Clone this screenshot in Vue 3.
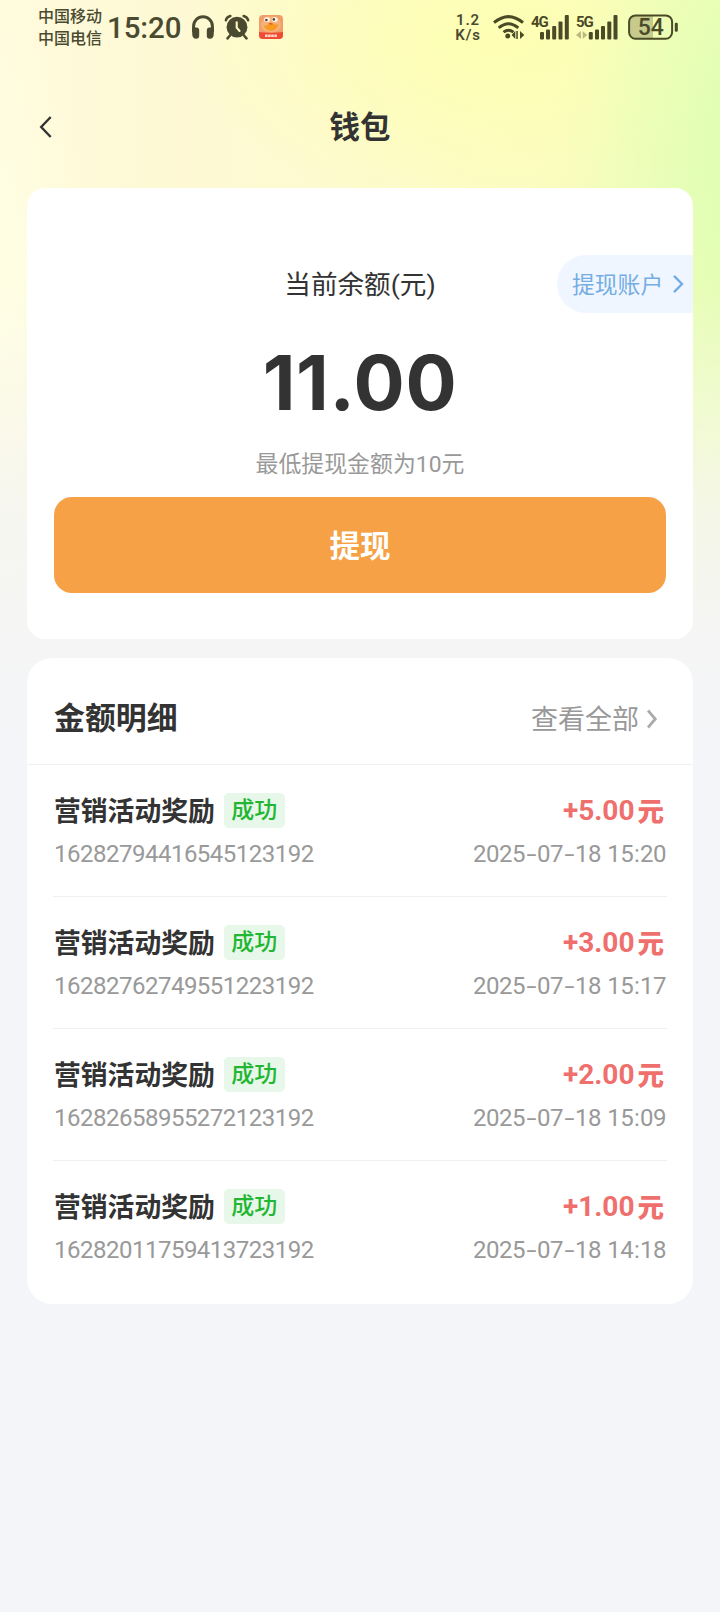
<script setup>
const records = [
  { id: '16282794416545123192', amount: '+5.00', day: ['2025', '07', '18'], time: ['15', '20'] },
  { id: '16282762749551223192', amount: '+3.00', day: ['2025', '07', '18'], time: ['15', '17'] },
  { id: '16282658955272123192', amount: '+2.00', day: ['2025', '07', '18'], time: ['15', '09'] },
  { id: '16282011759413723192', amount: '+1.00', day: ['2025', '07', '18'], time: ['14', '18'] },
]
</script>

<template>
  <div class="page">
    <header class="status">
      <div class="carriers"><span>中国移动</span><span>中国电信</span></div>
      <span class="clock">15:20</span>
      <svg class="headphones" width="24" height="26" viewBox="0 0 24 26">
        <path d="M2.6 18V12.2a9.4 9.4 0 0 1 18.8 0V18" fill="none" stroke="#4a4a31" stroke-width="3" />
        <path d="M1.2 13.5h4.3q2.7 0 2.7 3v5q0 3.2-2.9 3.2-4.1 0-4.1-5zM22.8 13.5h-4.3q-2.7 0-2.7 3v5q0 3.2 2.9 3.2 4.1 0 4.1-5z" fill="#4a4a31" />
      </svg>
      <svg class="alarm" width="26" height="26" viewBox="0 0 26 26">
        <g fill="none" stroke="#4a4a31" stroke-linecap="round">
          <path d="M1.8 6.4A6 6 0 0 1 6.4 2M19.6 2a6 6 0 0 1 4.6 4.4" stroke-width="2.4" />
          <path d="M6 21.5l-2.5 2.8M20 21.5l2.5 2.8" stroke-width="2.6" />
        </g>
        <circle cx="13" cy="13.2" r="10.4" fill="#4a4a31" />
        <path d="M12.7 8.2v5.4l2.9 3.4" fill="none" stroke="#fdf9c9" stroke-width="2.1" stroke-linecap="round" />
      </svg>
      <svg class="app" width="24" height="24" viewBox="0 0 24 24">
        <defs><clipPath id="appClip"><rect width="24" height="24" rx="4" /></clipPath></defs>
        <g clip-path="url(#appClip)">
          <rect width="24" height="24" fill="#f0a067" />
          <ellipse cx="12" cy="9.5" rx="10" ry="8" fill="#f5b07b" />
          <ellipse cx="8" cy="4.6" rx="3" ry="2.5" fill="#fff6e6" /><ellipse cx="15.7" cy="4.4" rx="3" ry="2.5" fill="#fff6e6" />
          <circle cx="7.4" cy="5" r="1.3" fill="#54412f" /><circle cx="14.8" cy="4.4" r="1.3" fill="#54412f" />
          <path d="M4.5 10.5q3.5 1 5-2 2-1.5 4 0 3 2 6 .5-1 6-7.5 7-5.5-1-7.5-5.5z" fill="#f79b24" />
          <path d="M9.5 8.5q3-1 4.5.5-2 1.5-4.5-.5z" fill="#cf6327" />
          <path d="M0 17q12 1.600 24 0V24H0z" fill="#ef4b35" />
          <path d="M6 20.800h12" stroke="#ffd9c8" stroke-width="2.400" stroke-dasharray="2.600 .5" />
        </g>
      </svg>
      <div class="speed"><span>1.2</span><span>K/s</span></div>
      <svg class="wifi" width="32" height="26" viewBox="0 0 32 26">
        <g fill="none" stroke="#4a4a27" stroke-width="3">
          <path d="M1 8.700Q15.500-3.500 30 8.700" />
          <path d="M5.700 13.900q9.800-8.400 19.600 0" />
          <path d="M10.500 18.200q5-4 10 0" />
        </g>
        <circle cx="14.800" cy="22" r="2.500" fill="#4a4a27" />
        <path d="M22.300 17v8l-3.700-4zM23.300 17h1.500v8h-1.500zM27 17v8l4.300-4z" fill="#4a4a27" />
      </svg>
      <svg class="signal4" width="39" height="26" viewBox="0 0 39 26">
        <text x="0" y="12.800" class="net">4G</text>
        <g fill="#4a4a27">
          <rect x="9" y="18" width="4" height="7.500" rx="1" /><rect x="15" y="15.500" width="4" height="10" rx="1" />
          <rect x="21.200" y="12" width="4" height="13.500" rx="1" /><rect x="27.500" y="7.500" width="4" height="18" rx="1" />
          <rect x="33.800" y="1" width="4" height="24.500" rx="1" />
        </g>
      </svg>
      <svg class="signal5" width="43" height="26" viewBox="0 0 43 26">
        <text x="0" y="12.800" class="net">5G</text>
        <path d="M5 17v8l-5-4zM6.700 17v8l4.500-4z" fill="#b9ba7d" />
        <g fill="#4a4a27">
          <rect x="12.800" y="18" width="4" height="7.500" rx="1" /><rect x="19" y="15.500" width="4" height="10" rx="1" />
          <rect x="25" y="12" width="4" height="13.500" rx="1" /><rect x="31.300" y="7.500" width="4" height="18" rx="1" />
          <rect x="37.500" y="1" width="4" height="24.500" rx="1" />
        </g>
      </svg>
      <svg class="battery" width="51" height="26" viewBox="0 0 51 26">
        <path d="M8 2h17v22H8q-6 0-6-6V8q0-6 6-6z" fill="#c6cb8d" />
        <rect x="1.100" y="1.400" width="43" height="23.400" rx="6.500" fill="none" stroke="#4a4a27" stroke-width="2" />
        <rect x="46.800" y="8.800" width="3" height="9" rx="1.200" fill="#4a4a27" />
        <text x="22.800" y="21" class="percent">54</text>
      </svg>
    </header>

    <nav class="nav">
      <svg class="back" width="14" height="24" viewBox="0 0 14 24">
        <path d="M11.700 2L2.200 12l9.500 10" fill="none" stroke="#333" stroke-width="2.400" />
      </svg>
      <h1>钱包</h1>
    </nav>

    <section class="card balance">
      <div class="label-row">
        <span class="label">当前余额(元)</span>
        <div class="account">
          <span>提现账户</span>
          <svg width="12" height="20" viewBox="0 0 12 20"><path d="M2 1.800l8 8.200-8 8.200" fill="none" stroke="#75ade3" stroke-width="2.400" /></svg>
        </div>
      </div>
      <div class="total">11.00</div>
      <div class="hint">最低提现金额为10元</div>
      <button class="withdraw">提现</button>
    </section>

    <section class="card details">
      <div class="head">
        <h2>金额明细</h2>
        <div class="all">
          <span>查看全部</span>
          <svg width="12" height="20" viewBox="0 0 12 20"><path d="M2 1.500l7.300 8.500L2 18.500" fill="none" stroke="#aaa" stroke-width="2.700" /></svg>
        </div>
      </div>
      <ul>
        <li v-for="r in records" :key="r.id">
          <div class="line first">
            <span class="name">营销活动奖励</span>
            <span class="badge">成功</span>
            <span class="amount">{{ r.amount }}<b>元</b></span>
          </div>
          <div class="line second">
            <span class="order">{{ r.id }}</span>
            <span class="date">{{ r.day[0] }}<i>-</i>{{ r.day[1] }}<i>-</i>{{ r.day[2] }} {{ r.time[0] }}<em>:</em>{{ r.time[1] }}</span>
          </div>
        </li>
      </ul>
    </section>
  </div>
</template>

<style>
body {
  background: #f3f5f8;
}
</style>

<style scoped>
.page {
  width: 720px;
  height: 1612px;
  box-sizing: border-box;
  overflow: hidden;
  font-family: Roboto, "Noto Sans CJK SC", sans-serif;
  color: #333;
  background:
    linear-gradient(to bottom, rgba(244, 245, 246, 0) 280px, rgba(244, 245, 246, 0.4) 410px, rgba(244, 245, 246, 0.75) 510px, #f5f5f5 640px, #f3f5f8 760px),
    radial-gradient(ellipse 90px 260px at 0 280px, rgba(255, 255, 228, 0.9) 0%, rgba(255, 255, 228, 0) 100%),
    radial-gradient(ellipse 220px 400px at 780px 160px, #dcffb4 0%, rgba(222, 255, 180, 0.85) 30%, rgba(222, 255, 180, 0) 100%),
    radial-gradient(ellipse 320px 170px at 500px 40px, #feffb4 0%, rgba(254, 255, 180, 0.7) 35%, rgba(254, 255, 180, 0) 100%),
    linear-gradient(to right, #fffbde 0, #fef9d6 120px, #fefad0 320px, #fcfcc4 500px, #f6fdb9 720px);
}
.status {
  display: flex;
  align-items: center;
  height: 54px;
  padding-left: 38px;
  color: #4a4a31;
}
.carriers {
  display: flex;
  flex-direction: column;
  width: 64px;
  padding-top: 1px;
  font-size: 16px;
  line-height: 22px;
  font-weight: 500;
  white-space: nowrap;
}
.clock {
  width: 76px;
  margin-left: 5px;
  padding-top: 1px;
  font-size: 29.5px;
  font-weight: 500;
  letter-spacing: -0.1px;
}
.headphones { margin-left: 8px; }
.alarm { margin-left: 9px; }
.app { margin-left: 9px; }
.speed {
  display: flex;
  flex-direction: column;
  align-items: center;
  width: 28px;
  margin-left: 171px;
  padding-top: 1px;
  font-size: 15px;
  line-height: 15px;
  font-weight: 600;
  letter-spacing: 0.8px;
}
.wifi { margin-left: 11px; }
.signal4 { margin-left: 6px; }
.signal5 { margin-left: 6px; }
.battery { margin-left: 9px; }
.signal4, .signal5 { overflow: visible; }
.net {
  font: 700 15px Roboto, sans-serif;
  letter-spacing: -1px;
  fill: #4a4a27;
}
.percent {
  font: 500 23px Roboto, sans-serif;
  text-anchor: middle;
  fill: #4a4a27;
}
.nav {
  display: grid;
  grid-template-columns: 80px 1fr 80px;
  align-items: center;
  height: 146px;
  margin-bottom: -12px;
}
.back { margin-left: 39px; }
h1, h2 {
  margin: 0;
  font-size: 30.5px;
  line-height: 44px;
  font-weight: 700;
}
h1 {
  padding-top: 2px;
  text-align: center;
}
h2 { font-size: 30.9px; }
.card {
  width: 666px;
  margin: 0 auto;
  box-sizing: border-box;
  background: #fff;
}
.balance {
  display: flex;
  flex-direction: column;
  align-items: center;
  height: 451px;
  padding-top: 67px;
  border-radius: 18px;
}
.label-row {
  display: grid;
  grid-template-columns: 136px 1fr 136px;
  align-items: center;
  width: 100%;
  height: 58px;
}
.label {
  grid-column: 2;
  padding-bottom: 3px;
  text-align: center;
  font-size: 26.6px;
}
.account {
  display: flex;
  align-items: center;
  height: 58px;
  padding-left: 15px;
  box-sizing: border-box;
  border-radius: 29px 0 0 29px;
  background: #eff6ff;
  color: #75ade3;
  font-size: 22.8px;
}
.account span { padding-bottom: 2px; }
.account svg { margin-left: 9px; }
.total {
  margin-top: 23px;
  font-family: Inter, sans-serif;
  font-size: 76px;
  line-height: 92px;
  font-weight: 700;
  letter-spacing: 0.7px;
}
.hint {
  margin-top: 20px;
  font-size: 22.9px;
  line-height: 34px;
  color: #999;
}
.withdraw {
  width: 612px;
  height: 96px;
  margin-top: 15px;
  padding: 0 0 2px;
  border: 0;
  border-radius: 18px;
  background: #f6a145;
  color: #fff;
  font: 700 30.5px "Noto Sans CJK SC", sans-serif;
}
.details {
  height: 646px;
  margin-top: 19px;
  border-radius: 25px;
}
.head {
  display: flex;
  align-items: center;
  justify-content: space-between;
  height: 107px;
  padding: 15px 35px 0 27px;
  box-sizing: border-box;
  border-bottom: 1px solid #f0f0f0;
}
.all {
  display: flex;
  align-items: center;
  font-size: 27px;
  color: #999;
}
.all span { padding-bottom: 2px; }
.all svg { margin-left: 7px; }
ul {
  margin: 0;
  padding: 0 26px;
  list-style: none;
}
li {
  height: 132px;
  padding: 27px 1px 0;
  box-sizing: border-box;
  border-bottom: 1px solid #f0f0f0;
}
li:last-child { border-bottom: 0; }
.line {
  display: flex;
  align-items: center;
}
.first { height: 36px; }
.name {
  padding-bottom: 2px;
  font-size: 26.8px;
  font-weight: 700;
}
.badge {
  width: 61px;
  height: 35px;
  margin-left: 9px;
  border-radius: 5px;
  background: #e7f7e9;
  color: #22b632;
  font-size: 23px;
  line-height: 36px;
  font-weight: 500;
  text-align: center;
}
.amount {
  display: flex;
  align-items: center;
  margin-left: auto;
  margin-right: 2px;
  padding-top: 1px;
  font-size: 28px;
  font-weight: 700;
  color: #ef6f6d;
}
.amount b {
  margin-left: 3px;
  padding-bottom: 3px;
  font-size: 26.5px;
}
.second {
  justify-content: space-between;
  height: 51px;
  font-size: 24px;
  letter-spacing: -0.5px;
  color: #999;
}
.date { word-spacing: 1px; }
.date i {
  display: inline-block;
  width: 12px;
  font-style: normal;
  text-align: center;
  transform: scaleX(1.5);
}
.date em {
  margin: 0 0.7px;
  font-style: normal;
}
</style>
